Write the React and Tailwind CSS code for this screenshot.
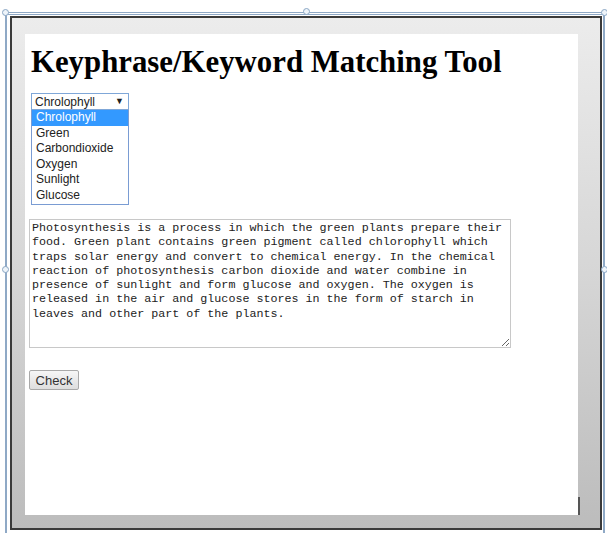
import React from 'react';

const options = ['Chrolophyll', 'Green', 'Carbondioxide', 'Oxygen', 'Sunlight', 'Glucose'];

const passage =
  'Photosynthesis is a process in which the green plants prepare their food. Green plant contains green pigment called chlorophyll which traps solar energy and convert to chemical energy. In the chemical reaction of photosynthesis carbon dioxide and water combine in presence of sunlight and form glucose and oxygen. The oxygen is released in the air and glucose stores in the form of starch in leaves and other part of the plants.';

const Handle = ({ className }) => (
  <div
    className={`absolute w-[7px] h-[7px] rounded-full border border-[#8aa6c4] bg-[#eef4fa] ${className}`}
  />
);

const App = () => {
  return (
    <div className="relative w-[607px] h-[533px] bg-white overflow-hidden">
      {/* selection frame around the embedded page */}
      <div className="ml-[5px] mt-[12px] w-[600px] h-[540px] border-t-[3px] border-l-[2px] border-r-[2px] border-double border-[#8fa9c6] pl-[3px] pt-[1px]">
        <div className="w-[592px] h-[514px] border-2 border-[#3a3a3a] bg-gradient-to-b from-[#ececec] via-[#d6d6d6] to-[#bcbcbc] pl-[13px] pt-[16px]">
          <div className="relative w-[553px] h-[481px] bg-white flex flex-col items-start pl-[4px] pt-[10px]">
            <h1 className="ml-[2px] font-['Liberation_Serif',serif] font-bold text-[30.8px] leading-[37px] text-black">
              Keyphrase/Keyword Matching Tool
            </h1>

            {/* open dropdown */}
            <div className="ml-[2px] mt-[12px] w-[98px] font-['Liberation_Sans',Arial,sans-serif] text-[12px] text-[#222]">
              <div className="h-[17px] border border-[#7fa7d8] flex items-center justify-between pl-[3px] pr-[4px] leading-none">
                <span>Chrolophyll</span>
                <span className="text-[9px]">▼</span>
              </div>
              <div className="flex flex-col border border-[#7a9cd3] border-t-0 pb-[1px]">
                {options.map((o, i) => (
                  <div
                    key={o}
                    className={`h-[15.5px] leading-[15.5px] pl-[4px] ${
                      i === 0 ? 'bg-[#3399ff] text-white' : ''
                    }`}
                  >
                    {o}
                  </div>
                ))}
              </div>
            </div>

            <textarea
              readOnly
              defaultValue={passage}
              className="mt-[14px] w-[482px] h-[129px] border border-[#c8c8c8] px-[2px] pt-[1px] font-['Liberation_Mono',monospace] text-[11.7px] leading-[14.3px] text-[#222] resize-y outline-none"
            />

            <button className="mt-[22px] w-[50px] h-[20px] border border-[#a9a9a9] rounded-[2px] bg-gradient-to-b from-[#f6f6f6] to-[#dedede] font-['Liberation_Sans',Arial,sans-serif] text-[13px] text-[#333] leading-none">
              Check
            </button>

            <div className="absolute right-[-2px] bottom-0 w-[2px] h-[18px] bg-[#555]" />
          </div>
        </div>
      </div>

      <Handle className="left-[2px] top-[9px]" />
      <Handle className="left-[303px] top-[8px]" />
      <Handle className="left-[601px] top-[9px]" />
      <Handle className="left-[2px] top-[266px]" />
      <Handle className="left-[601px] top-[266px]" />
    </div>
  );
};

export default App;
